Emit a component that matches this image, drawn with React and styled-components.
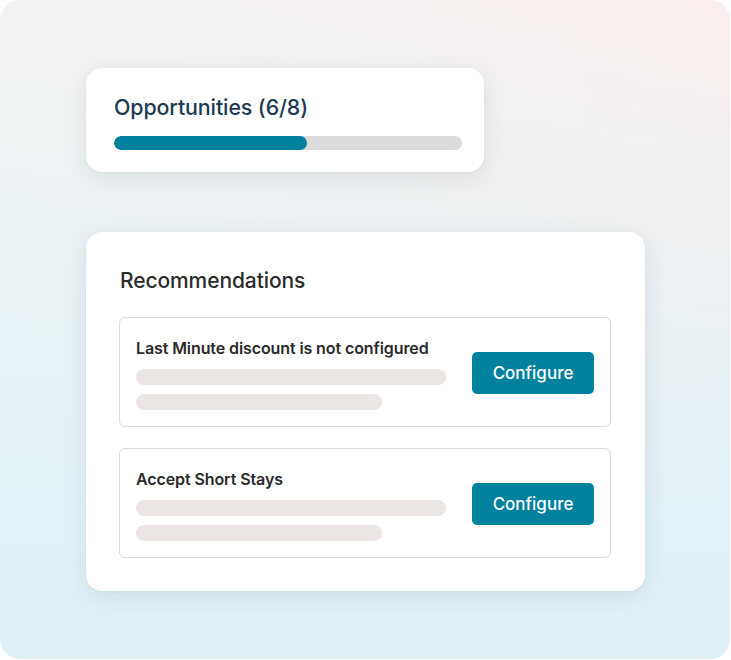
import React from 'react';
import styled, { createGlobalStyle } from 'styled-components';

const GlobalStyle = createGlobalStyle`
  html, body {
    margin: 0;
    padding: 0;
    background: #ffffff;
  }
  body {
    font-family: 'Inter', 'Noto Sans', sans-serif;
    -webkit-font-smoothing: antialiased;
  }
`;

const Canvas = styled.div`
  box-sizing: border-box;
  width: 730px;
  height: 659px;
  border-radius: 20px;
  overflow: hidden;
  padding: 68px 0 0 86px;
  display: flex;
  flex-direction: column;
  align-items: flex-start;
  gap: 60px;
  background:
    linear-gradient(180deg, rgba(223, 241, 247, 0) 0%, rgba(223, 241, 247, 0.55) 45%, #dff1f7 85%),
    linear-gradient(90deg, #f2f2f2 0%, #f5f0ef 55%, #f9eeec 100%);
`;

const Card = styled.div`
  box-sizing: border-box;
  background: #ffffff;
  border-radius: 16px;
  box-shadow: 0 6px 22px rgba(40, 60, 70, 0.09), 0 1px 3px rgba(0, 0, 0, 0.04);
`;

const ProgressCard = styled(Card)`
  width: 398px;
  padding: 26px 22px 22px 28px;
`;

const ProgressTitle = styled.h2`
  margin: 0 0 16px;
  font-size: 21.4px;
  line-height: 26px;
  font-weight: 500;
  color: #1d3951;
  letter-spacing: -0.1px;
`;

const Track = styled.div`
  height: 14px;
  border-radius: 7px;
  background: #dcdcdc;
  overflow: hidden;
`;

const Fill = styled.div`
  height: 100%;
  border-radius: 7px;
  background: #00819e;
`;

const RecoCard = styled(Card)`
  width: 559px;
  padding: 37px 34px 33px 33px;
`;

const RecoTitle = styled.h2`
  margin: 0 0 24px 1px;
  font-size: 21px;
  line-height: 24px;
  font-weight: 500;
  color: #2b2b2b;
  letter-spacing: -0.1px;
`;

const List = styled.div`
  display: flex;
  flex-direction: column;
  gap: 21px;
`;

const Item = styled.div`
  box-sizing: border-box;
  height: 110px;
  border: 1px solid #dadada;
  border-radius: 6px;
  padding: 19px 16px 16px 16px;
  display: flex;
  align-items: center;
  justify-content: space-between;
`;

const ItemBody = styled.div`
  display: flex;
  flex-direction: column;
`;

const ItemTitle = styled.div`
  font-size: 16px;
  line-height: 20px;
  font-weight: 600;
  color: #2a2a2a;
  margin-bottom: 11px;
  letter-spacing: -0.1px;
`;

const Skeleton = styled.div`
  height: 16px;
  width: ${(props) => props.w}px;
  border-radius: 8px;
  background: #ebe6e3;
  & + & {
    margin-top: 9px;
  }
`;

const Button = styled.button`
  width: 122px;
  height: 42px;
  border: none;
  border-radius: 5px;
  background: #00819e;
  color: #ffffff;
  font-family: inherit;
  font-size: 17px;
  font-weight: 500;
  cursor: pointer;
  margin-top: -2px;
`;

const recommendations = [
  { title: 'Last Minute discount is not configured' },
  { title: 'Accept Short Stays' },
];

export default function App() {
  const done = 6;
  const total = 8;
  // bar fill in the picture is a bit shorter than 6/8
  const pct = 55.5;

  return (
    <>
      <GlobalStyle />
      <Canvas>
        <ProgressCard>
          <ProgressTitle>Opportunities ({done}/{total})</ProgressTitle>
          <Track>
            <Fill style={{ width: `${pct}%` }} />
          </Track>
        </ProgressCard>

        <RecoCard>
          <RecoTitle>Recommendations</RecoTitle>
          <List>
            {recommendations.map((r) => (
              <Item key={r.title}>
                <ItemBody>
                  <ItemTitle>{r.title}</ItemTitle>
                  <Skeleton w={310} />
                  <Skeleton w={246} />
                </ItemBody>
                <Button>Configure</Button>
              </Item>
            ))}
          </List>
        </RecoCard>
      </Canvas>
    </>
  );
}
